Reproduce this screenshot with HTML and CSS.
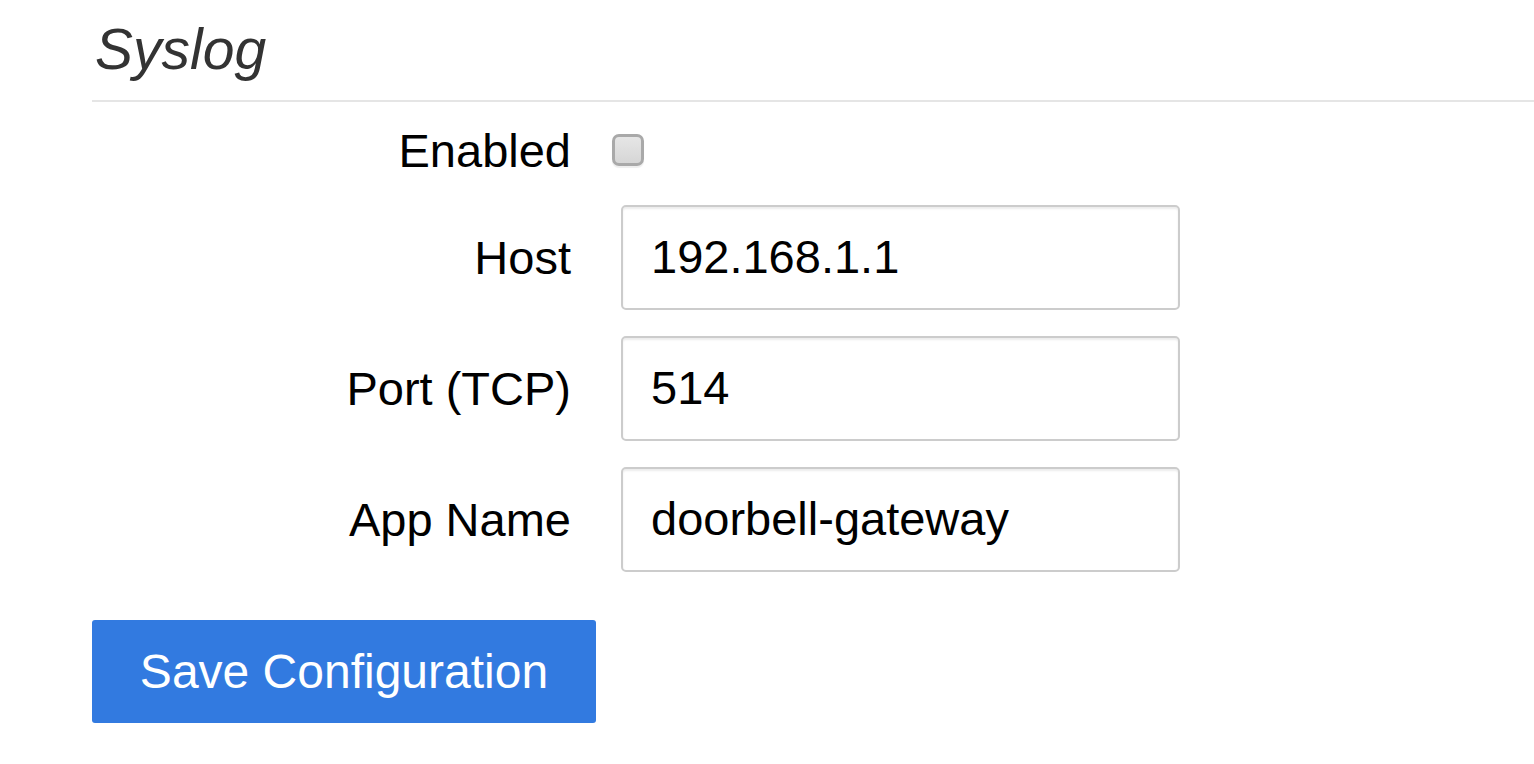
FILE: index.html
```html
<!DOCTYPE html>
<html>
<head>
<meta charset="utf-8">
<link rel="stylesheet" href="styles.css">
</head>
<body>
<div class="page">
  <h2 class="title">Syslog</h2>
  <form class="form">
    <div class="row row-check">
      <label class="label">Enabled</label>
      <div class="field"><span class="checkbox"></span></div>
    </div>
    <div class="row">
      <label class="label">Host</label>
      <div class="field"><div class="input">192.168.1.1</div></div>
    </div>
    <div class="row">
      <label class="label">Port (TCP)</label>
      <div class="field"><div class="input">514</div></div>
    </div>
    <div class="row">
      <label class="label">App Name</label>
      <div class="field"><div class="input">doorbell-gateway</div></div>
    </div>
    <div class="actions">
      <button type="button" class="btn">Save Configuration</button>
    </div>
  </form>
</div>
</body>
</html>
```
FILE: styles.css
```css
html, body {
  margin: 0;
  padding: 0;
  background: #fff;
}
body {
  font-family: "Liberation Sans", Arial, sans-serif;
  color: #000;
  overflow: hidden;
}
.page {
  padding-left: 92px;
}
.title {
  margin: 0;
  padding-top: 13px;
  height: 102px;
  box-sizing: border-box;
  font-size: 57px;
  font-weight: normal;
  font-style: italic;
  color: #333;
  line-height: 72px;
  padding-left: 3px;
  border-bottom: 2px solid #e5e5e5;
}
.form {
  margin: 0;
}
.row {
  display: grid;
  grid-template-columns: 479px 559px;
  column-gap: 50px;
  align-items: center;
  margin-top: 26px;
}
.row-check {
  margin-top: 17px;
  height: 62px;
}
.row-check + .row {
  margin-top: 24px;
}
.label {
  text-align: right;
  font-size: 47px;
}
.field {
  display: flex;
  align-items: center;
}
.checkbox {
  display: block;
  width: 32px;
  height: 32px;
  box-sizing: border-box;
  margin-left: -9px;
  border: 3px solid #a9a9a9;
  border-radius: 7px;
  background: linear-gradient(#e6e6e6, #d6d6d6);
  box-shadow: 0 2px 1px #eee;
}
.input {
  width: 559px;
  height: 105px;
  box-sizing: border-box;
  border: 2px solid #ccc;
  border-radius: 5px;
  box-shadow: inset 0 2px 2px rgba(0,0,0,0.075);
  padding-left: 28px;
  font-size: 47px;
  line-height: 99px;
  color: #000;
}
.actions {
  margin-top: 48px;
}
.btn {
  display: block;
  width: 504px;
  height: 103px;
  border: 0;
  border-radius: 3px;
  background: #327ae0;
  color: #fff;
  font-family: "Liberation Sans", Arial, sans-serif;
  font-size: 48px;
  padding: 0;
}
```
